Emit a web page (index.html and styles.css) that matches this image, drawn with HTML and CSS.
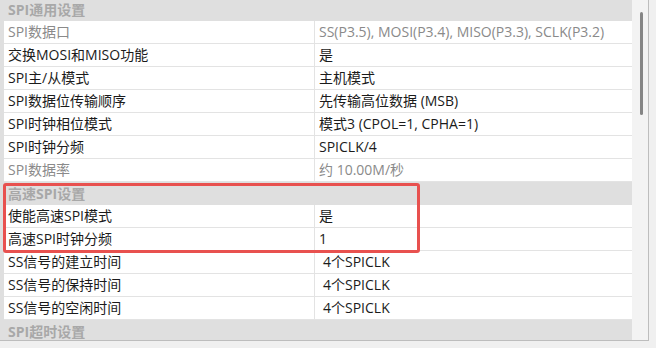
FILE: index.html
```html
<!DOCTYPE html>
<html lang="zh-CN">
<head>
  <meta charset="UTF-8">
  <title>SPI 设置</title>
  <link rel="stylesheet" href="styles.css">
</head>
<body>
  <div class="window">
    <div class="pane">
      <!-- Property grid -->
      <div class="grid">
        <div class="group">SPI通用设置</div>
        <div class="row readonly"><div class="name">SPI数据口</div><div class="value">SS(P3.5), MOSI(P3.4), MISO(P3.3), SCLK(P3.2)</div></div>
        <div class="row"><div class="name">交换MOSI和MISO功能</div><div class="value">是</div></div>
        <div class="row"><div class="name">SPI主/从模式</div><div class="value">主机模式</div></div>
        <div class="row"><div class="name">SPI数据位传输顺序</div><div class="value">先传输高位数据 (MSB)</div></div>
        <div class="row"><div class="name">SPI时钟相位模式</div><div class="value">模式3 (CPOL=1, CPHA=1)</div></div>
        <div class="row"><div class="name">SPI时钟分频</div><div class="value">SPICLK/4</div></div>
        <div class="row readonly"><div class="name">SPI数据率</div><div class="value">约 10.00M/秒</div></div>

        <div class="group">高速SPI设置</div>
        <div class="row"><div class="name">使能高速SPI模式</div><div class="value">是</div></div>
        <div class="row"><div class="name">高速SPI时钟分频</div><div class="value">1</div></div>
        <div class="row"><div class="name">SS信号的建立时间</div><div class="value indent">4个SPICLK</div></div>
        <div class="row"><div class="name">SS信号的保持时间</div><div class="value indent">4个SPICLK</div></div>
        <div class="row"><div class="name">SS信号的空闲时间</div><div class="value indent">4个SPICLK</div></div>

        <div class="group">SPI超时设置</div>
      </div>

      <!-- Vertical scrollbar -->
      <div class="vscroll">
        <div class="thumb"></div>
      </div>

      <!-- Annotation box -->
      <div class="highlight"></div>
    </div>
    <div class="statusbar"></div>
  </div>
</body>
</html>
```

FILE: styles.css
```css
/* General Reset */
* {
  margin: 0;
  padding: 0;
  box-sizing: border-box;
}

body {
  width: 656px;
  height: 348px;
  overflow: hidden;
  background: #f0f0f0;
  font-family: "Open Sans", "Noto Sans CJK SC", sans-serif;
  font-size: 14px;
  color: #1b1b1b;
}

.window {
  display: flex;
  flex-direction: column;
  height: 348px;
}

/* Grid pane */
.pane {
  position: relative;
  display: flex;
  width: 649px;
  height: 341px;
  border-right: 1px solid #bdbdbd;
  border-bottom: 1px solid #bdbdbd;
  overflow: hidden;
}

.grid {
  width: 632px;
  margin-top: -2px;
  background: #dfdfdf;
}

.group {
  height: 23px;
  line-height: 23px;
  padding-left: 8px;
  font-weight: bold;
  color: #a8a8a8;
}

.row {
  display: flex;
  height: 23px;
  margin-left: 4px;
  background: #fff;
  border-bottom: 1px solid #e3e3e3;
  line-height: 22px;
}

.name {
  width: 311px;
  padding-left: 4px;
  border-right: 1px solid #e3e3e3;
  white-space: nowrap;
}

.value {
  flex: 1;
  padding-left: 4px;
  white-space: nowrap;
}

.value.indent {
  padding-left: 8px;
}

.readonly {
  color: #8a8a8a;
}

/* Scrollbar */
.vscroll {
  flex: 1;
  position: relative;
  background: #f3f3f3;
}

.thumb {
  position: absolute;
  left: 8px;
  top: 12px;
  width: 3px;
  height: 103px;
  border-radius: 2px;
  background: #858585;
}

/* Red annotation */
.highlight {
  position: absolute;
  left: 3px;
  top: 183px;
  width: 417px;
  height: 70px;
  border: 3px solid #e8514f;
  border-radius: 3px;
}

.statusbar {
  flex: 1;
  background: #f0f0f0;
}
```
